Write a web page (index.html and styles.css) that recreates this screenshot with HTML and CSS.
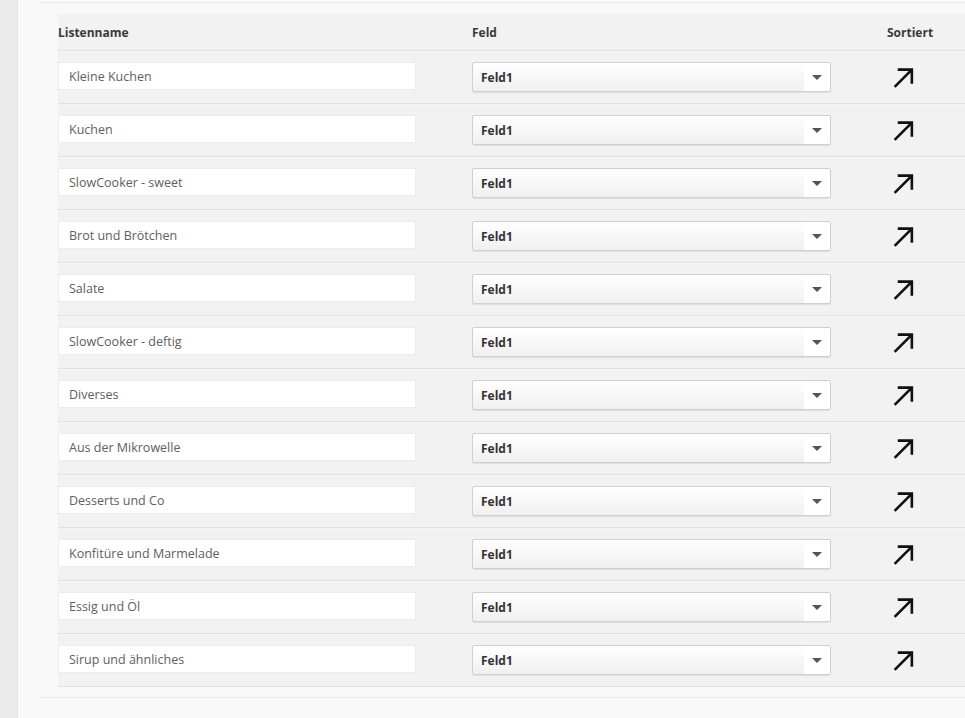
FILE: index.html
```html
<!DOCTYPE html>
<html lang="de">
<head>
<meta charset="utf-8">
<title>Listen</title>
<link rel="stylesheet" href="styles.css">
</head>
<body>
<div class="layout">
  <div class="strip"></div>
  <main class="main">
    <div class="panel">
      <div class="table">
        <div class="row head">
          <div class="c1">Listenname</div>
          <div class="c2">Feld</div>
          <div class="c3">Sortiert</div>
        </div>
        <div class="row"><div class="input">Kleine Kuchen</div><div class="select"><span>Feld1</span><i class="caret"></i></div><div class="sort"><svg viewBox="0 0 22 22"><path d="M2.5 20 L19 3.5 M5.5 3.5 H19 V17"/></svg></div></div>
        <div class="row"><div class="input">Kuchen</div><div class="select"><span>Feld1</span><i class="caret"></i></div><div class="sort"><svg viewBox="0 0 22 22"><path d="M2.5 20 L19 3.5 M5.5 3.5 H19 V17"/></svg></div></div>
        <div class="row"><div class="input">SlowCooker - sweet</div><div class="select"><span>Feld1</span><i class="caret"></i></div><div class="sort"><svg viewBox="0 0 22 22"><path d="M2.5 20 L19 3.5 M5.5 3.5 H19 V17"/></svg></div></div>
        <div class="row"><div class="input">Brot und Brötchen</div><div class="select"><span>Feld1</span><i class="caret"></i></div><div class="sort"><svg viewBox="0 0 22 22"><path d="M2.5 20 L19 3.5 M5.5 3.5 H19 V17"/></svg></div></div>
        <div class="row"><div class="input">Salate</div><div class="select"><span>Feld1</span><i class="caret"></i></div><div class="sort"><svg viewBox="0 0 22 22"><path d="M2.5 20 L19 3.5 M5.5 3.5 H19 V17"/></svg></div></div>
        <div class="row"><div class="input">SlowCooker - deftig</div><div class="select"><span>Feld1</span><i class="caret"></i></div><div class="sort"><svg viewBox="0 0 22 22"><path d="M2.5 20 L19 3.5 M5.5 3.5 H19 V17"/></svg></div></div>
        <div class="row"><div class="input">Diverses</div><div class="select"><span>Feld1</span><i class="caret"></i></div><div class="sort"><svg viewBox="0 0 22 22"><path d="M2.5 20 L19 3.5 M5.5 3.5 H19 V17"/></svg></div></div>
        <div class="row"><div class="input">Aus der Mikrowelle</div><div class="select"><span>Feld1</span><i class="caret"></i></div><div class="sort"><svg viewBox="0 0 22 22"><path d="M2.5 20 L19 3.5 M5.5 3.5 H19 V17"/></svg></div></div>
        <div class="row"><div class="input">Desserts und Co</div><div class="select"><span>Feld1</span><i class="caret"></i></div><div class="sort"><svg viewBox="0 0 22 22"><path d="M2.5 20 L19 3.5 M5.5 3.5 H19 V17"/></svg></div></div>
        <div class="row"><div class="input">Konfitüre und Marmelade</div><div class="select"><span>Feld1</span><i class="caret"></i></div><div class="sort"><svg viewBox="0 0 22 22"><path d="M2.5 20 L19 3.5 M5.5 3.5 H19 V17"/></svg></div></div>
        <div class="row"><div class="input">Essig und Öl</div><div class="select"><span>Feld1</span><i class="caret"></i></div><div class="sort"><svg viewBox="0 0 22 22"><path d="M2.5 20 L19 3.5 M5.5 3.5 H19 V17"/></svg></div></div>
        <div class="row last"><div class="input">Sirup und ähnliches</div><div class="select"><span>Feld1</span><i class="caret"></i></div><div class="sort"><svg viewBox="0 0 22 22"><path d="M2.5 20 L19 3.5 M5.5 3.5 H19 V17"/></svg></div></div>
      </div>
    </div>
  </main>
</div>
</body>
</html>
```

FILE: styles.css
```css
html, body {
  margin: 0;
  padding: 0;
  height: 100%;
  overflow: hidden;
}
body {
  background: #f9f9f9;
  font-family: "Open Sans", "DejaVu Sans", sans-serif;
  color: #333;
}
.layout {
  display: flex;
  height: 100%;
}
.strip {
  width: 17px;
  flex: none;
  background: #ebebeb;
  border-right: 1px solid #e2e2e2;
}
.main {
  flex: 1;
  padding-left: 22px;
  padding-top: 2px;
}
.panel {
  border-top: 1px solid #ebebeb;
  border-bottom: 1px solid #e6e6e6;
  padding: 11px 0 10px 18px;
}
.table {
  background: #f2f2f2;
}
.row {
  display: grid;
  grid-template-columns: 358px 359px 1fr;
  column-gap: 56px;
  align-items: center;
  height: 53px;
  border-bottom: 1px solid #e1e1e1;
  box-sizing: border-box;
  box-shadow: inset 0 1px 0 #f7f7f7;
}
.row.head {
  height: 37px;
  font-size: 12px;
  font-weight: 700;
  color: #3a3a3a;
  padding-top: 1px;
  box-shadow: none;
}
.input {
  height: 28px;
  background: #fff;
  border: 1px solid #ececec;
  box-sizing: border-box;
  padding-left: 10px;
  font-size: 12.5px;
  line-height: 27px;
  color: #606060;
  margin-top: -3px;
}
.select {
  height: 30px;
  box-sizing: border-box;
  border: 1px solid #d0d0d0;
  border-radius: 2px;
  background: linear-gradient(#ffffff, #f0f0f0);
  box-shadow: 0 1px 1px rgba(0,0,0,0.08);
  display: flex;
  align-items: center;
  font-size: 12px;
  font-weight: 700;
  color: #333;
  padding-left: 8px;
  margin-top: 0;
}
.select span {
  flex: 1;
}
.caret {
  width: 26px;
  height: 28px;
  background: #fff;
  position: relative;
  border-radius: 0 2px 2px 0;
}
.caret::after {
  content: "";
  position: absolute;
  left: 8px;
  top: 12px;
  border-left: 5px solid transparent;
  border-right: 5px solid transparent;
  border-top: 5px solid #555;
}
.sort {
  display: flex;
  padding-left: 5px;
  margin-top: 1px;
}
.sort svg {
  width: 23px;
  height: 23px;
  fill: none;
  stroke: #111;
  stroke-width: 2.5;
}
```
